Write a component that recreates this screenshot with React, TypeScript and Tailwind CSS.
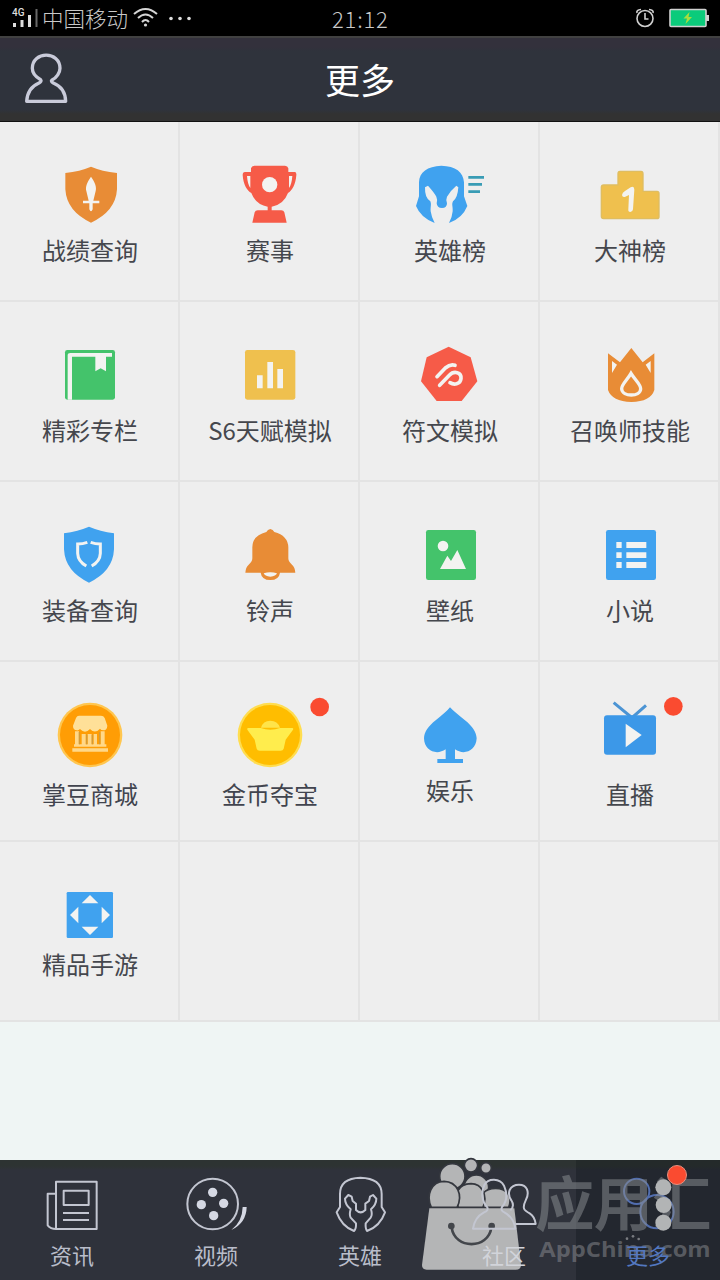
import type { ReactNode } from "react";

const ORANGE = "#e88c36";
const RED = "#f65b48";
const BLUE = "#40a2ef";
const YELLOW = "#efc04e";
const GREEN = "#44c36b";
const PALE = "#f3f3f1";

type Entry = {
  label: string;
  icon: ReactNode;
  right?: boolean;
  gap?: string;
  tint?: string;
};

const entries: Entry[] = [
  {
    label: "战绩查询",
    icon: (
      <>
        <path fill={ORANGE} d="M273 50 Q240 64 196 69 V118 Q200 184 273 218 Q347 184 351 118 V69 Q306 64 273 50Z" />
        <path fill={PALE} d="M273 80 C260 98 256 112 259 123 L266 152 H249 V160 H268 V178 Q273 190 278 178 V160 H298 V152 H280 L287 123 C290 112 286 98 273 80Z" />
      </>
    ),
  },
  {
    label: "赛事",
    right: true,
    icon: (
      <>
        <path fill={RED} d="M753 55 Q755 47 763 47 H855 Q863 47 865 55 V66 H884 Q890 66 889 75 C887 104 876 122 864 129 Q851 164 815 170 V181 H844 Q851 181 853 187 L860 218 H757 L764 187 Q766 181 773 181 H803 V170 Q767 164 754 129 C741 122 730 104 728 75 Q728 66 735 66 H753Z" />
        <path fill={PALE} d="M741 78 H751 V114 Q743 104 741 78Z M867 78 H877 Q875 104 867 114Z" />
        <circle cx="809" cy="104" r="23" fill={PALE} />
      </>
    ),
  },
  {
    label: "英雄榜",
    icon: (
      <>
        <path fill={BLUE} d="M244 47 C202 49 178 66 177 97 V139 L168 168 Q182 203 224 219 Q214 200 212 184 C211 169 215 164 211 154 Q194 144 195 112 L204 107 Q223 128 229 140 Q233 148 230 160 Q231 174 246 174 Q261 174 261 160 Q257 148 261 140 Q270 123 289 107 L295 112 Q293 144 279 154 C274 164 279 169 278 184 Q277 200 267 219 Q307 205 322 168 L312 139 V97 C310 66 287 48 244 47Z" />
        <path stroke="#399cb5" strokeWidth="8" d="M325 82 H372 M325 103 H366 M325 125 H360" />
      </>
    ),
  },
  {
    label: "大神榜",
    right: true,
    icon: (
      <>
        <path fill={YELLOW} stroke="#dfbd60" strokeWidth="4" strokeLinejoin="round" d="M780 64 H843 Q849 64 849 71 V124 H891 Q897 124 897 130 V200 Q897 206 890 206 H731 Q724 206 724 199 V112 Q724 105 731 105 H774 V71 Q774 64 780 64Z" />
        <path fill={PALE} d="M786 135 Q787 128 795 123 L812 112 Q823 107 823 119 L819 178 Q818 186 811 186 Q804 186 805 178 L807 135 L796 140 Q787 143 786 135Z" />
      </>
    ),
  },
  {
    label: "精彩专栏",
    icon: (
      <>
        <rect x="195" y="60" width="150" height="149" rx="7" fill={GREEN} />
        <path fill={PALE} d="M203 209 V74 Q203 69 211 69 H336 V80 H318 V124 L302 115 L286 124 V80 H216 V209Z" />
      </>
    ),
  },
  {
    label: "S6天赋模拟",
    right: true,
    icon: (
      <>
        <rect x="735" y="60" width="151" height="149" rx="7" fill={YELLOW} />
        <path fill={PALE} d="M771 136 H788 V175 H771Z M802 96 H819 V175 H802Z M832 117 H849 V175 H832Z" />
      </>
    ),
  },
  {
    label: "符文模拟",
    icon: (
      <>
        <path fill={RED} d="M266 50 L332 82 L352 154 L305 213 H230 L183 154 L200 82Z" />
        <path fill="none" stroke={PALE} strokeWidth="11" strokeLinecap="round" strokeLinejoin="round" d="M231 140 L256 114 Q271 101 285 106 M239 166 L268 136 C282 121 305 127 303 146 C301 164 281 165 270 158" />
      </>
    ),
  },
  {
    label: "召唤师技能",
    right: true,
    icon: (
      <>
        <path fill={ORANGE} d="M744 70 L780 97 L814 54 L848 97 L883 70 V180 Q872 215 814 216 Q756 214 744 180Z" />
        <path fill={PALE} d="M756 93 L771 104 L756 129Z M872 93 L857 104 L872 129Z" />
        <path fill="none" stroke={PALE} strokeWidth="10" d="M813 130 C802 150 784 163 785 177 C787 201 841 201 842 177 C843 163 825 150 813 130Z" />
      </>
    ),
  },
  {
    label: "装备查询",
    icon: (
      <>
        <path fill={BLUE} d="M267 50 Q234 64 192 70 V118 Q195 184 267 218 Q339 184 342 118 V70 Q300 64 267 50Z" />
        <path fill="none" stroke={PALE} strokeWidth="9" d="M262 97 Q248 102 233 102 V130 Q234 154 259 168 M272 97 Q286 102 301 102 V130 Q300 154 275 168" />
      </>
    ),
  },
  {
    label: "铃声",
    right: true,
    icon: (
      <>
        <path fill={ORANGE} d="M811 57 Q803 58 799 66 Q757 77 757 112 V145 Q757 155 746 164 Q737 172 736 188 H782 Q785 210 811 210 Q837 210 840 188 H886 Q885 172 876 164 Q865 155 865 145 V112 Q864 77 823 66 Q819 58 811 57Z" />
        <path fill={PALE} d="M791 190 Q811 184 831 190 Q828 199 811 200 Q794 199 791 190Z" />
      </>
    ),
  },
  {
    label: "壁纸",
    icon: (
      <>
        <rect x="198" y="60" width="150" height="150" rx="7" fill={GREEN} />
        <circle cx="249" cy="108" r="16" fill={PALE} />
        <path fill={PALE} d="M240 177 L262 137 L273 153 L292 120 L318 177Z" />
      </>
    ),
  },
  {
    label: "小说",
    right: true,
    icon: (
      <>
        <rect x="738" y="60" width="150" height="150" rx="7" fill={BLUE} />
        <path fill={PALE} d="M769 96h16v18h-16z M799 96h60v18h-60z M769 127h16v17h-16z M799 127h60v17h-60z M769 156h16v18h-16z M799 156h60v18h-60z" />
      </>
    ),
  },
  {
    label: "掌豆商城",
    gap: "mt-[5px]",
    tint: "text-[#41444e]",
    icon: (
      <>
        <circle cx="270" cy="135" r="97" fill="#ffc64f" />
        <circle cx="270" cy="135" r="90" fill="#ff9d05" />
        <path fill="#ffe098" d="M237 77 H303 Q311 77 314 84 L322 107 Q321 121 310 121 Q303 121 300 116 Q285 133 270 117 Q255 133 240 117 Q235 122 230 121 Q219 120 219 107 L228 84 Q231 77 237 77Z" />
        <path fill="#ffd889" d="M225 124h12v39h-12z M245 132h12v31h-12z M263 132h12v31h-12z M281 132h10v31h-10z M302 124h12v39h-12z M222 163h97v7h-97z M217 175h107v10h-107z" />
        <path stroke="#d39a36" strokeWidth="4" d="M238 126V163 M299 126V163 M260 134V163 M277 134V163" />
      </>
    ),
  },
  {
    label: "金币夺宝",
    right: true,
    gap: "mt-[5px]",
    tint: "text-[#41444e]",
    icon: (
      <>
        <circle cx="810" cy="135" r="97" fill="#ffdd4f" />
        <circle cx="810" cy="135" r="90" fill="#ffbd00" />
        <path fill="#ffe44a" d="M783 113 Q789 92 811 92 Q833 92 840 113Z" />
        <path fill="#ffed4d" d="M744 114 H782 Q811 124 840 114 H877 Q881 114 879 119 L857 149 L851 176 Q849 182 842 182 H779 Q772 182 770 176 L764 149 L742 119 Q741 114 744 114Z" />
        <circle cx="959" cy="51" r="28" fill="#fa4b30" />
      </>
    ),
  },
  {
    label: "娱乐",
    icon: (
      <path fill={BLUE} d="M270 52 Q261 64 228 90 C204 109 192 126 192 145 C193 183 230 197 257 178 V207 H232 V219 H309 V207 H285 V178 C312 197 348 183 350 145 C349 126 338 109 314 90 Q281 64 270 52Z" />
    ),
  },
  {
    label: "直播",
    right: true,
    gap: "mt-[5px]",
    icon: (
      <>
        <path fill="none" stroke="#4b94d4" strokeWidth="9" d="M761 38 L816 83 L858 46" />
        <rect x="732" y="76" width="156" height="118" rx="9" fill="#3c98e8" />
        <path fill={PALE} d="M797 101 L845 135 L797 172Z" />
        <circle cx="940" cy="49" r="28" fill="#fa4b30" />
      </>
    ),
  },
  {
    label: "精品手游",
    gap: "-mt-[5px]",
    icon: (
      <>
        <rect x="200" y="66" width="139" height="138" rx="4" fill={BLUE} />
        <path fill={PALE} d="M270 75 L295 100 H245Z M270 195 L295 170 H245Z M210 135 L235 110 V160Z M330 135 L305 110 V160Z" />
      </>
    ),
  },
];

function GridCell({ entry }: { entry?: Entry }) {
  return (
    <div className="flex h-[180px] flex-col items-center border-r-2 border-b-2 border-[#e3e3e3] bg-[#eeeeee] pt-[30px]">
      {entry && (
        <>
          <svg width="120" height="85" viewBox={entry.right ? "630 6 360 255" : "90 6 360 255"} className="ml-[2px] shrink-0 overflow-visible">
            {entry.icon}
          </svg>
          <span className={`${entry.gap ?? "mt-[1px]"} ${entry.tint ?? "text-[#45474d]"} ml-[2px] text-[24px] leading-[24px] whitespace-nowrap`}>
            {entry.label}
          </span>
        </>
      )}
    </div>
  );
}

const tabs: { label: string; box: string; icon: ReactNode }[] = [
  {
    label: "资讯",
    box: "0 30 432 246",
    icon: (
      <path d="M168 95 H290 V237 H168Z M168 131 H143 V226 Q152 237 168 237 M191 122 H266 V165 H191Z M189 189 H267 M189 210 H267" />
    ),
  },
  {
    label: "视频",
    box: "432 30 432 246",
    icon: (
      <>
        <circle cx="638" cy="162" r="76" />
        <g fill="#d5d8e3" stroke="none">
          <circle cx="638" cy="127" r="14" />
          <circle cx="604" cy="164" r="14" />
          <circle cx="671" cy="160" r="14" />
          <circle cx="641" cy="197" r="14" />
          <path d="M728 171 H740 Q739 219 694 240 Q727 215 728 171Z" />
        </g>
      </>
    ),
  },
  {
    label: "英雄",
    box: "864 30 432 246",
    icon: (
      <path d="M1081 83 C1041 84 1020 101 1020 132 V171 L1010 187 Q1025 229 1062 243 Q1069 236 1068 220 L1052 203 Q1047 195 1052 178 Q1035 163 1035 146 L1045 135 L1055 140 L1058 153 L1068 161 V180 Q1082 194 1096 180 V161 L1107 153 L1110 140 L1119 135 L1129 146 Q1129 163 1113 178 Q1118 195 1112 203 L1097 220 Q1096 236 1101 243 Q1140 229 1155 187 L1145 171 V132 C1145 101 1122 84 1081 83Z" />
    ),
  },
  {
    label: "社区",
    box: "96 30 432 246",
    icon: (
      <>
        <path d="M331 181 Q345 169 334 151 C319 129 329 104 357 104 C382 104 389 127 378 149 C365 176 372 181 389 190 Q404 199 407 222 H346" />
        <path d="M262 172 C244 153 244 125 253 105 C264 84 300 84 312 107 C322 130 321 154 306 171 Q301 182 313 187 Q341 202 346 236 H219 Q224 202 252 187 Q266 182 262 172Z" />
      </>
    ),
  },
  {
    label: "更多",
    box: "528 30 432 246",
    icon: (
      <g stroke="#526eaf">
        <circle cx="710" cy="124" r="38" />
        <circle cx="771" cy="185" r="50" />
      </g>
    ),
  },
];

function Watermark() {
  return (
    <svg viewBox="0 0 960 390" className="pointer-events-none absolute right-0 bottom-0 h-[130px] w-[320px]">
      <g fill="#b4b5b6" stroke="#34373e" strokeWidth="5">
        <circle cx="213" cy="46" r="20" />
        <circle cx="258" cy="54" r="16" />
        <circle cx="229" cy="112" r="37" />
        <circle cx="157" cy="79" r="38" />
        <path d="M249 172 C232 135 255 115 287 115 C319 115 339 137 326 172Z" />
        <path d="M175 172 C158 135 175 101 213 101 C246 102 264 135 249 172Z" />
        <path d="M94 172 C77 135 94 95 132 94 C172 95 190 135 171 172Z" />
      </g>
      <path fill="#b4b5b6" d="M88 175 H343 L363 344 Q363 359 347 359 H80 Q66 359 66 345Z" />
      <path fill="none" stroke="#43464b" strokeWidth="8" strokeLinecap="round" d="M155 233 C164 299 265 299 274 233" />
      <circle cx="154" cy="228" r="10" fill="#43464b" />
      <circle cx="275" cy="228" r="10" fill="#43464b" />
      <g fill="#8b8d92" fillOpacity="0.52">
        <text x="406" y="227" fontSize="177" fontWeight="700" textLength="528">
          应用汇
        </text>
        <text x="418" y="321" fontSize="64" fontWeight="700" fontFamily="Open Sans, Noto Sans, sans-serif" textLength="514" lengthAdjust="spacingAndGlyphs">
          AppChina.com
        </text>
      </g>
      <g fill="#b2b4b5">
        <circle cx="790" cy="112" r="24" />
        <circle cx="791" cy="165" r="24" />
        <circle cx="790" cy="218" r="24" />
      </g>
      <g fill="#797b80">
        <circle cx="681" cy="266" r="4" />
        <circle cx="699" cy="259" r="4" />
        <circle cx="716" cy="267" r="4" />
      </g>
    </svg>
  );
}

function StatusBar() {
  return (
    <div className="flex h-[36px] items-center bg-black text-[#c9c9c9]">
      <svg width="42" height="36" viewBox="0 0 42 36" className="shrink-0">
        <text x="12" y="16" fontSize="10" fontWeight="500" fontFamily="Roboto, sans-serif" fill="#dedede">4G</text>
        <path stroke="#dedede" strokeWidth="3" d="M14.5 23V27 M22 20V27 M29.5 15V27" />
        <path stroke="#686868" strokeWidth="2" d="M36.5 9V27" />
      </svg>
      <span className="w-[88px] text-[21.5px] leading-[36px] font-light whitespace-nowrap">中国移动</span>
      <svg width="66" height="36" viewBox="0 0 66 36" fill="none" stroke="#d5d5d5" strokeWidth="2">
        <path d="M4 14 Q15.5 4 27 14 M8 18 Q15.5 11 23 18 M12 22 Q15.5 18 19 22" />
        <circle cx="15.5" cy="25" r="1.6" fill="#d5d5d5" stroke="none" />
        <g fill="#dedede" stroke="none">
          <circle cx="41" cy="18.5" r="1.8" />
          <circle cx="50" cy="18.5" r="1.8" />
          <circle cx="59" cy="18.5" r="1.8" />
        </g>
      </svg>
      <span className="ml-[136px] w-[62px] text-[22px] leading-[36px] font-light tracking-[0.8px]">21:12</span>
      <svg width="90" height="36" viewBox="630 0 90 36" className="ml-auto">
        <g fill="none" stroke="#d0d0d0" strokeWidth="1.6">
          <circle cx="645" cy="18.5" r="8" />
          <path d="M645 13V19H648.5 M637 13Q636 10 641 9.5 M653 13Q654 10 649 9.5" />
          <rect x="670" y="9.5" width="36" height="17" rx="1" fill="#0bcb7b" />
          <path d="M707.5 15V21" strokeWidth="3" />
        </g>
        <path fill="#a9dd3d" d="M689.5 12 L683.5 18.5 H687 L685.5 24 L692 17 H688.5Z" />
      </svg>
    </div>
  );
}

export default function App() {
  return (
    <div className="flex h-[1280px] w-[720px] flex-col overflow-hidden bg-[#eff5f4] font-['Noto_Sans_CJK_SC','Noto_Sans',sans-serif]">
      <StatusBar />
      <header className="grid h-[86px] grid-cols-[120px_1fr_120px] items-center border-t-2 border-b border-t-[#414141] border-b-[#111111] bg-[linear-gradient(#33313c_0px,#33313c_9px,#2f333c_13px,#2f333c_72px,#323232_76px)]">
        <svg width="100" height="83" viewBox="0 114 300 249" fill="none" stroke="#c9cbda" strokeWidth="10" strokeLinejoin="round">
          <path d="M122 239 C105 230 97 216 97 205 C97 152 180 152 180 205 C180 217 170 234 156 240 Q151 244 160 249 C185 259 196 275 197 304 H80 C82 275 93 259 117 249 Q126 244 122 239Z" />
        </svg>
        <h1 className="-mt-[2px] text-center text-[35px] leading-[50px] text-white">更多</h1>
      </header>

      <main className="grid grid-cols-4">
        {Array.from({ length: 20 }, (_, i) => (
          <GridCell key={i} entry={entries[i]} />
        ))}
      </main>

      <nav className="relative mt-auto grid h-[120px] grid-cols-5 bg-[#2f323b] text-[#b9bdca]">
        {tabs.map((tab, i) => (
          <div
            key={tab.label}
            className={
              i === 4
                ? "flex flex-col items-center bg-[linear-gradient(#242a2a_0px,#242a2a_6px,#23272f_10px)] text-[#5378c0]"
                : "flex flex-col items-center bg-[linear-gradient(#2d3332_0px,#2d3332_6px,#2f323b_10px)]"
            }
          >
            <svg width="144" height="82" viewBox={tab.box} fill="none" stroke="#c3c6d1" strokeWidth="6" strokeLinejoin="round" className={i === 3 ? "relative z-10 shrink-0" : "shrink-0"}>
              {tab.icon}
            </svg>
            <span className={i >= 3 ? "relative z-10 -mt-[2px] text-[22px] leading-[28px] text-current" : "-mt-[2px] text-[22px] leading-[28px]"}>
              {i === 3 ? <span className="text-[#d2d4da]">{tab.label}</span> : tab.label}
            </span>
          </div>
        ))}
        <Watermark />
        <span className="absolute top-[5px] right-[33px] z-20 size-[20px] rounded-full border border-[#e7907f] bg-[#fa4b30]" />
      </nav>
    </div>
  );
}
